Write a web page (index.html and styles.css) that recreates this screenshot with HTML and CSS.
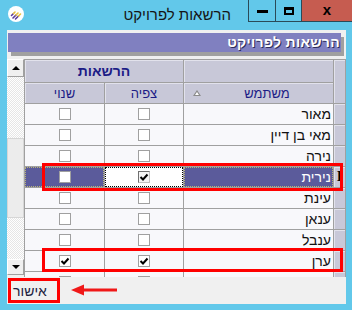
FILE: index.html
```html
<!DOCTYPE html>
<html lang="he">
<head>
  <meta charset="UTF-8">
  <title>הרשאות לפרויקט</title>
  <link rel="stylesheet" href="styles.css">
</head>
<body>
  <div class="window">
    <div class="titlebar">
      <svg class="app-icon" width="16" height="16" viewBox="0 0 16 16">
        <circle cx="8" cy="8" r="8" fill="#fff"/>
        <g stroke-width="1.6" stroke-linecap="round">
          <line x1="3.5" y1="9.5" x2="5.5" y2="7.5" stroke="#5b3a9e"/>
          <line x1="5.5" y1="7.5" x2="7" y2="6" stroke="#e9c23a"/>
          <line x1="5" y1="12" x2="8" y2="9" stroke="#5b3a9e"/>
          <line x1="8" y1="9" x2="10" y2="7" stroke="#e9c23a"/>
          <line x1="7.5" y1="13" x2="10.5" y2="10" stroke="#5b3a9e"/>
          <line x1="10.5" y1="10" x2="12.5" y2="8" stroke="#e9c23a"/>
        </g>
      </svg>
      <span class="title">הרשאות לפרויקט</span>
      <div class="controls">
        <span class="ctl min"><i></i></span>
        <span class="ctl max"><i></i></span>
        <span class="ctl close">x</span>
      </div>
    </div>

    <div class="client">
      <div class="banner">הרשאות לפרויקט</div>

      <div class="grid-area">
        <div class="vscroll">
          <div class="sb-btn up"></div>
          <div class="sb-track t1"></div>
          <div class="sb-thumb"></div>
          <div class="sb-track t2"></div>
          <div class="sb-btn down"></div>
        </div>

        <div class="sheet">
          <div class="hd hd-group">הרשאות</div>
          <div class="hd"></div>
          <div class="hd corner"></div>
          <div class="hd">שנוי</div>
          <div class="hd">צפיה</div>
          <div class="hd hd-user"><span class="sort"></span><span class="hd-text">משתמש</span></div>

          <div class="cell"><span class="cb"></span></div>
          <div class="cell"><span class="cb"></span></div>
          <div class="cell name">מאור</div>
          <div class="rh"></div>

          <div class="cell"><span class="cb"></span></div>
          <div class="cell"><span class="cb"></span></div>
          <div class="cell name">מאי בן דיין</div>
          <div class="rh"></div>

          <div class="cell"><span class="cb"></span></div>
          <div class="cell"><span class="cb"></span></div>
          <div class="cell name">נירה</div>
          <div class="rh"></div>

          <div class="cell sel"><span class="cb"></span></div>
          <div class="cell focus"><span class="cb on dark"><svg width="10" height="10" viewBox="0 0 10 10"><path d="M1.5 5 L4 7.5 L8.5 2.5" fill="none" stroke="#000" stroke-width="2"/></svg></span></div>
          <div class="cell name sel">נירית</div>
          <div class="rh cur">I</div>

          <div class="cell"><span class="cb"></span></div>
          <div class="cell"><span class="cb"></span></div>
          <div class="cell name">עינת</div>
          <div class="rh"></div>

          <div class="cell"><span class="cb"></span></div>
          <div class="cell"><span class="cb"></span></div>
          <div class="cell name">ענאן</div>
          <div class="rh"></div>

          <div class="cell"><span class="cb"></span></div>
          <div class="cell"><span class="cb"></span></div>
          <div class="cell name">ענבל</div>
          <div class="rh"></div>

          <div class="cell"><span class="cb on"><svg width="10" height="10" viewBox="0 0 10 10"><path d="M1.5 5 L4 7.5 L8.5 2.5" fill="none" stroke="#000" stroke-width="2"/></svg></span></div>
          <div class="cell"><span class="cb on"><svg width="10" height="10" viewBox="0 0 10 10"><path d="M1.5 5 L4 7.5 L8.5 2.5" fill="none" stroke="#000" stroke-width="2"/></svg></span></div>
          <div class="cell name">ערן</div>
          <div class="rh"></div>

          <div class="cell"><span class="cb"></span></div>
          <div class="cell"><span class="cb"></span></div>
          <div class="cell name"></div>
          <div class="rh"></div>
        </div>
      </div>

      <div class="footer">
        <div class="ok-btn">אישור</div>
        <svg class="arrow" width="46" height="12" viewBox="0 0 46 12">
          <polygon points="0,6 13,0.5 13,11.5" fill="#f01818"/>
          <rect x="12" y="4.5" width="34" height="3" fill="#f01818"/>
        </svg>
      </div>
    </div>

    <div class="mark mark-1"></div>
    <div class="mark mark-2"></div>
  </div>
</body>
</html>
```

FILE: styles.css
```css
* { box-sizing: border-box; }
body { margin: 0; width: 352px; height: 310px; overflow: hidden; background: #62c8ea; font-family: "Liberation Sans", "DejaVu Sans", sans-serif; }
.window { position: relative; height: 310px; }

/* title bar */
.titlebar { display: flex; align-items: flex-start; height: 30px; }
.app-icon { margin: 6px 0 0 8px; }
.title { margin-left: auto; margin-right: 17px; font-size: 15px; line-height: 30px; color: #151515; }
.controls { display: flex; }
.ctl { display: flex; align-items: center; justify-content: center; height: 22px; border: 1px solid #2a4a58; border-top: 0; }
.ctl + .ctl { border-left: 0; }
.min { width: 28px; }
.min i { width: 11px; height: 3px; background: #000; margin-top: 2px; }
.max { width: 26px; }
.max i { width: 10px; height: 8px; border: 2px solid #000; border-top-width: 3px; }
.close { width: 50px; background: #c65c50; font-weight: bold; font-size: 15px; line-height: 1; color: #000; padding-bottom: 2px; border-right: 0; }

/* client area */
.client { margin-left: 7px; width: 339px; height: 274px; background: #f0f0f0; display: flex; flex-direction: column; }
.banner { flex: none; margin: 3px 5px 7px 1px; height: 19px; background: #8080c0; box-shadow: 3px 4px 0 #a0a0a0; color: #fff; font-weight: bold; font-size: 14px; line-height: 19px; text-align: right; direction: rtl; padding-right: 1px; letter-spacing: 0.3px; text-shadow: 1px 1px 0 #2c2c58; }

.grid-area { flex: none; display: flex; height: 218px; overflow: hidden; }

/* scrollbar */
.vscroll { flex: none; width: 17px; display: flex; flex-direction: column; }
.sb-btn { flex: none; background: #f0f0f0; border: 1px solid; border-color: #fff #a0a0a0 #a0a0a0 #fff; display: flex; align-items: center; justify-content: center; }
.sb-btn.up { height: 18px; }
.sb-btn.down { height: 16px; }
.sb-btn.up::after { content: ""; border-left: 4px solid transparent; border-right: 4px solid transparent; border-bottom: 4px solid #000; }
.sb-btn.down::after { content: ""; border-left: 4px solid transparent; border-right: 4px solid transparent; border-top: 4px solid #000; }
.sb-track { flex: none; background-color: #fff; background-image: repeating-conic-gradient(#e6e6e6 0 25%, #fff 0 50%); background-size: 2px 2px; }
.sb-track.t1 { height: 61px; }
.sb-track.t2 { height: 41px; }
.sb-thumb { flex: none; height: 80px; background: #ececec; border: 1px solid #d6d6d6; }

/* data grid */
.sheet { flex: none; align-self: flex-start; width: 322px; display: grid; grid-template-columns: 79px 78px 149px 11px; grid-template-rows: 22px 20px; grid-auto-rows: 20px; gap: 1px; background: #a0a0a0; border: 1px solid #a0a0a0; }
.hd { background: #c8c8d8; color: #1c1c86; font-size: 13px; display: flex; align-items: center; justify-content: center; box-shadow: inset 1px 1px 0 #e2e2ec; }
.hd-group { grid-column: span 2; font-weight: bold; font-size: 14px; }
.corner { grid-row: span 2; }
.hd-user { justify-content: flex-start; padding-left: 9px; }
.sort { width: 0; height: 0; border-left: 4px solid transparent; border-right: 4px solid transparent; border-bottom: 6px solid #8a8a8a; position: relative; }
.sort::after { content: ""; position: absolute; left: -2px; top: 2px; border-left: 2px solid transparent; border-right: 2px solid transparent; border-bottom: 3px solid #fff; }
.hd-text { flex: 1; text-align: center; }

.cell { background: #f8f8fb; display: flex; align-items: center; justify-content: center; }
.name { display: block; direction: rtl; text-align: right; padding-right: 2px; font-size: 14px; line-height: 20px; color: #111; white-space: nowrap; }
.rh { background: #c8c8d8; box-shadow: inset 1px 1px 0 #e2e2ec; }
.rh.cur { font-family: "Liberation Serif", serif; font-weight: bold; font-size: 14px; line-height: 20px; text-align: center; color: #000; }

.sel { background: #5b5b9b; outline: 1px dotted #b8b478; outline-offset: -1px; }
.name.sel { color: #fff; }
.focus { background: #fff; outline: 1px dotted #000; outline-offset: -1px; }

.cb { width: 12px; height: 12px; background: #fff; border: 1px solid #a0a0a0; display: flex; align-items: center; justify-content: center; }
.cb.dark { border-color: #707070 #c0c0c0 #c0c0c0 #707070; background: #f4f4f4; }

/* footer */
.footer { flex: 1; display: flex; align-items: flex-start; padding: 1px 0 0 1px; }
.ok-btn { width: 52px; height: 25px; border: 3px solid #f00; font-size: 14px; color: #1c1c40; display: flex; align-items: center; justify-content: center; padding-right: 8px; }
.arrow { margin: 6px 0 0 11px; }

/* annotations */
.mark { position: absolute; border: 3px solid #f00; }
.mark-1 { left: 42px; top: 163px; width: 301px; height: 28px; }
.mark-2 { left: 42px; top: 248px; width: 301px; height: 24px; }
```
